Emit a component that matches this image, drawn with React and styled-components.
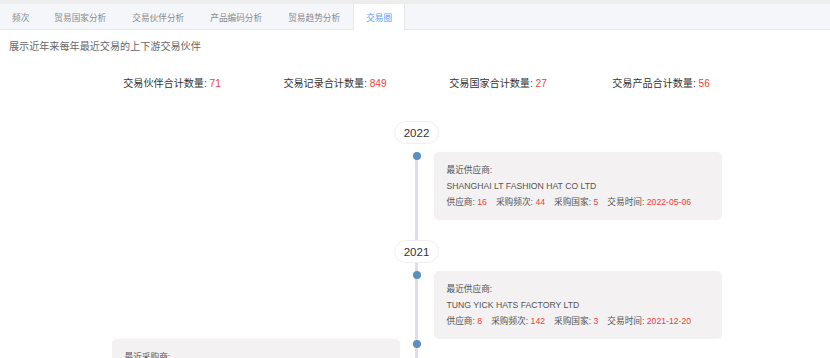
import React from "react";
import styled, { createGlobalStyle } from "styled-components";

const Global = createGlobalStyle`
  html, body { margin: 0; padding: 0; background: #fff; }
  body { font-family: "Liberation Sans", "Noto Sans CJK SC", sans-serif; overflow: hidden; }
  * { box-sizing: border-box; }
`;

const Page = styled.div`
  width: 830px;
  height: 358px;
  overflow: hidden;
  background: #fff;
`;

const TabBar = styled.div`
  display: flex;
  height: 30px;
  border-top: 4px solid #ededed;
  border-bottom: 1px solid #e6e8ee;
  background: #f5f6fa;
`;

const Tab = styled.div`
  display: flex;
  align-items: center;
  padding: 0 ${(p) => (p.$first ? "11px" : "12px")};
  font-size: 8.67px;
  color: ${(p) => (p.$active ? "#5b9ef5" : "#8a8a8a")};
  background: ${(p) => (p.$active ? "#fff" : "transparent")};
  border-left: 1px solid ${(p) => (p.$active ? "#e6e8ee" : "transparent")};
  border-right: 1px solid ${(p) => (p.$active ? "#e6e8ee" : "transparent")};
  margin-bottom: -1px;
  white-space: nowrap;
`;

const Desc = styled.div`
  padding: 9px 9px 0;
  font-size: 10.1px;
  line-height: 16px;
  color: #666;
`;

const Stats = styled.div`
  display: grid;
  grid-template-columns: repeat(4, 163px);
  justify-content: center;
  padding-left: 3px;
  margin-top: 21px;
`;

const Stat = styled.div`
  text-align: center;
  font-size: 10.1px;
  line-height: 16px;
  color: #333;
  white-space: nowrap;
`;

const Red = styled.span`
  color: #f43b3b;
`;

const Timeline = styled.div`
  position: relative;
  display: flex;
  flex-direction: column;
  align-items: center;
  padding-left: 3px;
  margin-top: 29px;

  &::before {
    content: "";
    position: absolute;
    left: 415px;
    top: 35px;
    bottom: 0;
    width: 3px;
    background: #dcdee9;
  }
`;

const YearPill = styled.div`
  position: relative;
  z-index: 1;
  height: 23px;
  width: 45px;
  margin-top: ${(p) => (p.$first ? "0" : "20px")};
  margin-bottom: 8px;
  border: 1px solid #efefef;
  border-radius: 12px;
  background: #fff;
  display: flex;
  align-items: center;
  justify-content: center;
  font-size: 11.5px;
  color: #333;
`;

const Item = styled.div`
  position: relative;
  z-index: 1;
  align-self: stretch;
  display: grid;
  grid-template-columns: 1fr 16px 1fr;
  column-gap: 9px;
`;

const Dot = styled.div`
  grid-column: 2;
  grid-row: 1;
  justify-self: center;
  margin-top: ${(p) => p.$offset || 0}px;
  width: 8px;
  height: 8px;
  border-radius: 50%;
  background: #5b8ec1;
`;

const Card = styled.div`
  grid-row: 1;
  grid-column: ${(p) => (p.$side === "left" ? 1 : 3)};
  justify-self: ${(p) => (p.$side === "left" ? "end" : "start")};
  width: 288px;
  padding: 10px 13px;
  background: #f3f1f1;
  border-radius: 5px;
  font-size: 8.67px;
  line-height: 16px;
  color: #555;
`;

const Line = styled.div`
  white-space: nowrap;
`;

const MetaRow = styled.div`
  display: flex;
  gap: 9px;
  white-space: nowrap;
`;

const items = [
  {
    year: "2022",
    entries: [
      {
        side: "right",
        title: "最近供应商:",
        name: "SHANGHAI LT FASHION HAT CO LTD",
        meta: [
          ["供应商", "16"],
          ["采购频次", "44"],
          ["采购国家", "5"],
          ["交易时间", "2022-05-06"],
        ],
      },
    ],
  },
  {
    year: "2021",
    entries: [
      {
        side: "right",
        title: "最近供应商:",
        name: "TUNG YICK HATS FACTORY LTD",
        meta: [
          ["供应商", "8"],
          ["采购频次", "142"],
          ["采购国家", "3"],
          ["交易时间", "2021-12-20"],
        ],
      },
      {
        side: "left",
        offset: 1,
        title: "最近采购商:",
        name: "LIDS CANADA INC",
        meta: [
          ["采购商", "12"],
          ["采购频次", "37"],
          ["采购国家", "4"],
          ["交易时间", "2021-11-08"],
        ],
      },
    ],
  },
];

const tabs = ["频次", "贸易国家分析", "交易伙伴分析", "产品编码分析", "贸易趋势分析", "交易圈"];

export default function App() {
  return (
    <Page>
      <Global />
      <TabBar>
        {tabs.map((t, i) => (
          <Tab key={t} $first={i === 0} $active={i === tabs.length - 1}>
            {t}
          </Tab>
        ))}
      </TabBar>
      <Desc>展示近年来每年最近交易的上下游交易伙伴</Desc>
      <Stats>
        <Stat>交易伙伴合计数量: <Red>71</Red></Stat>
        <Stat>交易记录合计数量: <Red>849</Red></Stat>
        <Stat>交易国家合计数量: <Red>27</Red></Stat>
        <Stat>交易产品合计数量: <Red>56</Red></Stat>
      </Stats>
      <Timeline>
        {items.map((y, yi) => (
          <React.Fragment key={y.year}>
            <YearPill $first={yi === 0}>{y.year}</YearPill>
            {y.entries.map((e, ei) => (
              <Item key={ei}>
                <Dot $offset={e.offset} />
                <Card $side={e.side}>
                  <Line>{e.title}</Line>
                  <Line>{e.name}</Line>
                  <MetaRow>
                    {e.meta.map(([k, v]) => (
                      <span key={k}>
                        {k}: <Red>{v}</Red>
                      </span>
                    ))}
                  </MetaRow>
                </Card>
              </Item>
            ))}
          </React.Fragment>
        ))}
      </Timeline>
    </Page>
  );
}
